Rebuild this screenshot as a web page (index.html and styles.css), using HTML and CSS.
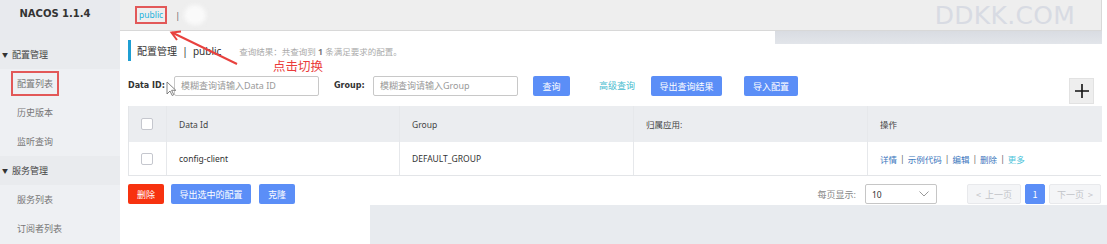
FILE: index.html
```html
<!DOCTYPE html>
<html lang="zh-CN">
  <head>
    <meta charset="UTF-8" />
    <meta name="viewport" content="width=device-width, initial-scale=1.0" />
    <title>Nacos 配置列表</title>
    <link rel="stylesheet" href="styles.css">
  </head>
  <body>
    <div class="app">
      <!-- sidebar -->
      <aside class="sidebar">
        <div class="brand">NACOS 1.1.4</div>
        <div class="menu-group"><span class="caret">▼</span>配置管理</div>
        <div class="menu-item"><span class="marked">配置列表</span></div>
        <div class="menu-item">历史版本</div>
        <div class="menu-item">监听查询</div>
        <div class="menu-group"><span class="caret">▼</span>服务管理</div>
        <div class="menu-item">服务列表</div>
        <div class="menu-item">订阅者列表</div>
      </aside>

      <!-- main -->
      <main class="main">
        <div class="topbar">
          <span class="ns-tab">public</span>
          <span class="ns-sep">|</span>
          <span class="ns-blur"></span>
          <span class="watermark">DDKK.COM</span>
        </div>
        <div class="top-shadow"></div>

        <section class="content">
          <div class="page-title">
            <span class="title-text">配置管理 &nbsp;|&nbsp; public</span>
            <span class="title-hint">查询结果：共查询到 <b>1</b> 条满足要求的配置。</span>
          </div>

          <div class="filters">
            <label class="f-label">Data ID:</label>
            <div class="f-input dataid">模糊查询请输入Data ID</div>
            <label class="f-label group">Group:</label>
            <div class="f-input">模糊查询请输入Group</div>
            <button class="btn btn-query">查询</button>
            <a class="adv-link">高级查询</a>
            <button class="btn btn-export">导出查询结果</button>
            <button class="btn btn-import">导入配置</button>
            <div class="add-box">
              <svg width="16" height="16" viewBox="0 0 16 16">
                <path d="M8 1v14M1 8h14" stroke="#111" stroke-width="1.6" />
              </svg>
            </div>
          </div>

          <div class="table">
            <div class="cell head chk"><span class="checkbox"></span></div>
            <div class="cell head">Data Id</div>
            <div class="cell head">Group</div>
            <div class="cell head">归属应用:</div>
            <div class="cell head">操作</div>

            <div class="cell chk"><span class="checkbox"></span></div>
            <div class="cell">config-client</div>
            <div class="cell">DEFAULT_GROUP</div>
            <div class="cell"></div>
            <div class="cell ops">
              <a>详情</a><i>|</i><a>示例代码</a><i>|</i><a>编辑</a><i>|</i><a>删除</a><i>|</i><a class="more">更多</a>
            </div>
          </div>

          <div class="bottom-bar">
            <button class="btn btn-del">删除</button>
            <button class="btn btn-exp-sel">导出选中的配置</button>
            <button class="btn btn-clone">克隆</button>
            <span class="page-size-label">每页显示:</span>
            <div class="select">
              <span>10</span>
              <svg width="10" height="6" viewBox="0 0 10 6">
                <path d="M0.5 0.5L5 5L9.5 0.5" fill="none" stroke="#999" stroke-width="1" />
              </svg>
            </div>
            <button class="pager prev">&lt;&nbsp; 上一页</button>
            <button class="pager current">1</button>
            <button class="pager next">下一页 &nbsp;&gt;</button>
          </div>
        </section>

        <div class="grey-area"></div>
      </main>
    </div>

    <!-- annotations drawn on top of the screenshot -->
    <svg class="annot" width="1107" height="244" viewBox="0 0 1107 244">
      <line x1="237" y1="64" x2="172" y2="32.5" stroke="#e8413e" stroke-width="2" />
      <polyline points="181,31.5 171.5,32.5 177,40" fill="none" stroke="#e8413e" stroke-width="2" />
      <path d="M167 82v12l3-3 2.2 4.5 1.6-.8-2.2-4.4h4.2z" fill="#fff" stroke="#666" stroke-width="0.8" />
    </svg>
    <div class="annot-text">点击切换</div>
  </body>
</html>
```

FILE: styles.css
```css
* {
  margin: 0;
  padding: 0;
  box-sizing: border-box;
}

body {
  font-family: "Noto Sans", "Noto Sans CJK SC", sans-serif;
  font-size: 9px;
  color: #333;
  background-color: #fff;
  width: 1107px;
  height: 244px;
  overflow: hidden;
  position: relative;
}

.app {
  display: flex;
  height: 244px;
}

/* sidebar */
.sidebar {
  width: 120px;
  background-color: #eef0f3;
  flex-shrink: 0;
}

.brand {
  height: 40px;
  padding-top: 7px;
  padding-right: 10px;
  text-align: center;
  font-family: "DejaVu Sans", sans-serif;
  font-weight: bold;
  font-size: 10px;
  line-height: 14px;
  color: #333;
  background-color: #e8eaee;
}

.menu-group,
.menu-item {
  height: 29px;
  display: flex;
  align-items: center;
  font-size: 9px;
  color: #555;
}

.menu-group {
  padding-left: 2px;
  background-color: #e9ebee;
  color: #444;
}

.caret {
  font-size: 6px;
  margin-right: 4px;
  color: #333;
}

.menu-item {
  padding-left: 17px;
  color: #777;
}

.marked {
  margin-left: -6px;
  padding: 4px 4px;
  border: 2px solid #e25858;
}

/* main */
.main {
  flex: 1;
  display: flex;
  flex-direction: column;
  position: relative;
}

.topbar {
  width: 982px;
  height: 31px;
  background-color: #eeeeee;
  border-bottom: 1px solid #d8d8d8;
  border-right: 1px solid #d8d8d8;
  display: flex;
  align-items: center;
  padding-left: 15px;
  flex-shrink: 0;
}

.ns-tab {
  color: #25b2dc;
  font-size: 8.5px;
  padding: 1px 2px;
  border: 2px solid #e25858;
  line-height: 12px;
}

.ns-sep {
  margin-left: 8px;
  color: #666;
}

.ns-blur {
  width: 22px;
  height: 20px;
  margin-left: 4px;
  border-radius: 10px;
  background-color: #fafafa;
  filter: blur(2px);
}

.watermark {
  margin-left: auto;
  margin-right: 26px;
  font-family: "DejaVu Sans", sans-serif;
  font-size: 25px;
  color: #d8dbe3;
  letter-spacing: 0.3px;
}

.top-shadow {
  position: absolute;
  left: 655px;
  top: 31px;
  width: 327px;
  height: 13px;
  background: linear-gradient(#d9dce2, #e2e5ea);
}

.content {
  margin-left: 8px;
  width: 973px;
}

.page-title {
  margin-top: 9px;
  height: 21px;
  border-left: 3px solid #1f9fd3;
  padding-left: 6px;
  display: flex;
  align-items: center;
}

.title-text {
  font-size: 10px;
  color: #333;
}

.title-hint {
  margin-left: 18px;
  font-size: 8.5px;
  color: #aaa;
}

.title-hint b {
  color: #777;
}

.filters {
  margin-top: 15px;
  height: 28px;
  display: flex;
  align-items: flex-start;
}

.f-label {
  height: 20px;
  line-height: 20px;
  width: 46px;
  font-family: "DejaVu Sans", sans-serif;
  font-weight: bold;
  font-size: 8px;
  color: #333;
}

.f-label.group {
  margin-left: 15px;
  width: 39px;
}

.f-input {
  width: 145px;
  height: 20px;
  border: 1px solid #c8c8c8;
  border-radius: 2px;
  padding-left: 6px;
  line-height: 18px;
  color: #999;
  font-size: 9px;
}

.btn {
  height: 20px;
  border: none;
  border-radius: 2px;
  background-color: #5b8ef7;
  color: #fff;
  font-family: "Noto Sans CJK SC", sans-serif;
  font-size: 9px;
}

.btn-query {
  width: 37px;
  margin-left: 15px;
}

.adv-link {
  margin-left: 29px;
  line-height: 20px;
  color: #48bccf;
  font-size: 9px;
}

.btn-export {
  width: 71px;
  margin-left: 16px;
}

.btn-import {
  width: 54px;
  margin-left: 22px;
}

.add-box {
  margin-left: auto;
  margin-right: 7px;
  margin-top: 2px;
  width: 25px;
  height: 26px;
  background-color: #eeeeee;
  border: 1px solid #e2e2e2;
  display: flex;
  align-items: center;
  justify-content: center;
}

/* table */
.table {
  margin-top: 2px;
  display: grid;
  grid-template-columns: 37px 233px 234px 234px 235px;
  grid-template-rows: 36px 33px;
  border: 1px solid #e3e5e8;
  border-top: none;
}

.cell {
  display: flex;
  align-items: center;
  padding-left: 12px;
  border-left: 1px solid #e6e8eb;
  font-size: 8.5px;
  color: #333;
  background-color: #fff;
}

.cell.head {
  background-color: #ebedf0;
  color: #444;
}

.cell.chk {
  border-left: none;
}

.checkbox {
  width: 12px;
  height: 12px;
  border: 1px solid #c5c7ce;
  border-radius: 2px;
  background-color: #fff;
}

.ops a {
  color: #3b76bd;
}

.ops i {
  font-style: normal;
  color: #666;
  margin: 0 3px;
}

.ops a.more {
  color: #4bc3da;
}

/* bottom bar */
.bottom-bar {
  margin-top: 8px;
  height: 20px;
  display: flex;
  align-items: center;
}

.btn-del {
  width: 36px;
  background-color: #f7320f;
}

.btn-exp-sel {
  width: 80px;
  margin-left: 7px;
}

.btn-clone {
  width: 36px;
  margin-left: 8px;
}

.page-size-label {
  margin-left: auto;
  color: #888;
  font-size: 9px;
}

.select {
  margin-left: 9px;
  width: 72px;
  height: 20px;
  border: 1px solid #c6c6c6;
  border-radius: 2px;
  display: flex;
  align-items: center;
  justify-content: space-between;
  padding: 0 7px 0 6px;
  font-size: 8.5px;
}

.pager {
  height: 20px;
  border: 1px solid #e8e9ec;
  border-radius: 2px;
  background-color: #f4f5f7;
  color: #c2c4c8;
  font-family: "Noto Sans CJK SC", sans-serif;
  font-size: 9px;
}

.pager.prev {
  width: 54px;
  margin-left: 30px;
}

.pager.current {
  width: 20px;
  margin-left: 4px;
  background-color: #5b8ef7;
  border-color: #5b8ef7;
  color: #fff;
}

.pager.next {
  width: 52px;
  margin-left: 4px;
}

.grey-area {
  margin-top: 1px;
  margin-left: 250px;
  flex: 1;
  background-color: #e8ebef;
}

/* annotations */
.annot {
  position: absolute;
  left: 0;
  top: 0;
  pointer-events: none;
}

.annot-text {
  position: absolute;
  left: 273px;
  top: 57px;
  font-family: "Noto Sans CJK SC", sans-serif;
  font-size: 12.5px;
  line-height: 17px;
  color: #ea3b3b;
}
```
